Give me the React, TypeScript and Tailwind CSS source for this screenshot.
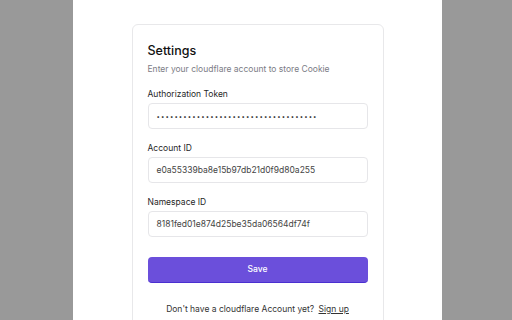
const fields = [
  { label: "Authorization Token", value: "", secret: true },
  { label: "Account ID", value: "e0a55339ba8e15b97db21d0f9d80a255" },
  { label: "Namespace ID", value: "8181fed01e874d25be35da06564df74f" },
];

export default function App() {
  return (
    <div className="h-[320px] overflow-hidden bg-[#999999] font-['Inter',sans-serif]">
      <div className="ml-[73px] h-full w-[369px] bg-white pt-[24px]">
        <div className="mx-auto w-[252px] rounded-md border border-[#e8e8ea] px-[15px] pt-[18px] pb-6">
          <h1 className="text-[12.5px] leading-[16px] font-medium text-[#111111]">Settings</h1>
          <p className="mt-[3px] text-[8.5px] leading-[14px] text-[#7c7c86]">
            Enter your cloudflare account to store Cookie
          </p>

          {fields.map((f, i) => (
            <div key={f.label} className={i === 0 ? "mt-[12px]" : "mt-[13px]"}>
              <label className="block text-[8.5px] leading-[12px] text-[#1f1f1f]">
                {f.label}
              </label>
              <div className="mt-[3px] flex h-[26px] items-center rounded-[4px] border border-[#e6e6e9] px-[8px] text-[8.5px] text-[#444444]">
                {f.secret ? (
                  <span className="text-[6px] tracking-[1.1px] text-[#222222]">
                    ••••••••••••••••••••••••••••••••••••
                  </span>
                ) : (
                  f.value
                )}
              </div>
            </div>
          ))}

          <button className="mt-[20px] flex h-[26px] w-full items-center justify-center rounded-[4px] border-b border-[#4a2fd0] bg-[#6b4fdb] text-[8.5px] font-medium text-white">
            Save
          </button>

          <p className="mt-[20px] text-center text-[8.5px] text-[#333333]">
            Don&apos;t have a cloudflare Account yet?{" "}
            <a className="ml-[2px] underline">Sign up</a>
          </p>
        </div>
      </div>
    </div>
  );
}
